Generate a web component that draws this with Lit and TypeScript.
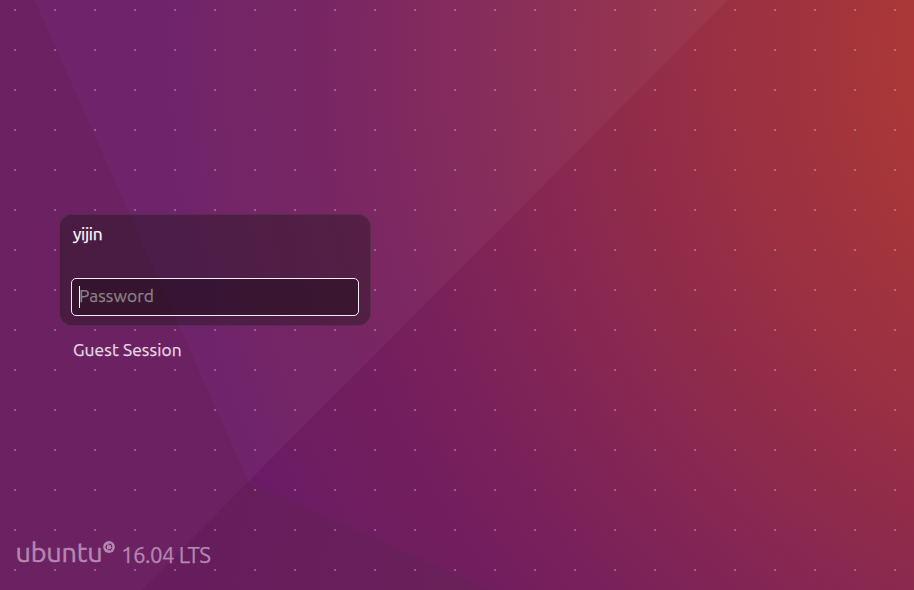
import { LitElement, html, css, svg } from "lit";
import { customElement, property } from "lit/decorators.js";

const PITCH = 40;
const PANEL = { left: 59, top: 213, right: 372, bottom: 326 };

function dotPath(width: number, height: number): string {
  let d = "";
  for (let y = 9; y < height; y += PITCH) {
    for (let x = 14; x < width; x += PITCH) {
      const covered = x > PANEL.left && x < PANEL.right && y > PANEL.top && y < PANEL.bottom;
      if (!covered) d += `M${x} ${y}h2v2h-2z`;
    }
  }
  return d;
}

@customElement("greeter-wallpaper")
export class GreeterWallpaper extends LitElement {
  static styles = css`
    :host { display: block; }
    svg { display: block; width: 914px; height: 590px; }
  `;
  render() {
    return html`<svg viewBox="0 0 914 590" aria-hidden="true">
      ${svg`
        <defs>
          <radialGradient id="warm" gradientUnits="userSpaceOnUse" cx="1160" cy="50" r="1000">
            <stop offset="0.245" stop-color="#ab3837"/>
            <stop offset="0.33" stop-color="#a3343c"/>
            <stop offset="0.43" stop-color="#9a3042"/>
            <stop offset="0.56" stop-color="#8e2a4b"/>
            <stop offset="0.66" stop-color="#842654"/>
            <stop offset="0.78" stop-color="#78205b"/>
            <stop offset="0.86" stop-color="#721e5e"/>
            <stop offset="0.94" stop-color="#6e1d61"/>
            <stop offset="1" stop-color="#6a1b65"/>
          </radialGradient>
          <linearGradient id="lower" gradientUnits="userSpaceOnUse" x1="200" y1="540" x2="480" y2="590">
            <stop offset="0" stop-color="#661d5d"/>
            <stop offset="1" stop-color="#6a2058"/>
          </linearGradient>
        </defs>
        <rect width="914" height="590" fill="url(#warm)"/>
        <path d="M34 0L248 482L728 0z" fill="#fff" fill-opacity=".04"/>
        <path d="M0 0H34L248 482L142 590H0z" fill="#6c2262"/>
        <path d="M248 482L142 590H490z" fill="url(#lower)"/>
        <path d=${dotPath(914, 590)} fill="#fff" fill-opacity=".27" shape-rendering="crispEdges"/>
      `}
    </svg>`;
  }
}

@customElement("login-box")
export class LoginBox extends LitElement {
  @property() user = "";
  static styles = css`
    :host {
      display: flex; flex-direction: column; justify-content: space-between;
      box-sizing: border-box; width: 312px; height: 112px; padding: 8px 11px 9px 11px;
      border: 1px solid rgba(120, 105, 115, .2); border-radius: 13px;
      background: rgba(16, 20, 14, .36);
    }
    .name { padding-left: 2px; color: #fff; font-size: 17.33px; line-height: 22px; letter-spacing: -.3px; -webkit-text-stroke: .25px currentColor; }
    .field {
      display: flex; align-items: center; box-sizing: border-box; height: 38px; padding-left: 7px;
      border: 1px solid #f3edf1; border-radius: 5px; background: rgba(0, 0, 0, .28);
      color: #898385; font-size: 17.33px;
    }
    .caret { width: 1px; height: 22px; margin-right: -1px; background: #fff; }
    .hint { line-height: 22px; margin-top: -2px; letter-spacing: .08px; -webkit-text-stroke: .25px currentColor; }
  `;
  render() {
    return html`<div class="name">${this.user}</div>
      <div class="field"><span class="caret"></span><span class="hint">Password</span></div>`;
  }
}

@customElement("release-mark")
export class ReleaseMark extends LitElement {
  static styles = css`
    :host { display: flex; align-items: flex-start; color: #b587b0; height: 32px; }
    .word { font-size: 27px; line-height: 32px; margin-top: -1px; letter-spacing: -.2px; -webkit-text-stroke: .45px currentColor; }
    .logo { width: 12px; height: 12px; margin: 4px 0 0 1px; }
    .version { font-size: 22.3px; line-height: 32px; margin: 2px 0 0 5.5px; letter-spacing: -.5px; -webkit-text-stroke: .25px currentColor; }
  `;
  render() {
    return html`<span class="word">ubuntu</span>
      <svg class="logo" viewBox="0 0 12 12" aria-hidden="true">
        <circle cx="6" cy="6" r="5.9" fill="currentColor"/>
        <circle cx="6" cy="6" r="2.8" fill="none" stroke="#6c2362" stroke-width="1.1" stroke-dasharray="4.86 1" stroke-dashoffset="-.5"/>
        <g fill="#6c2362"><circle cx="2.7" cy="6" r=".6"/><circle cx="7.7" cy="3.1" r=".6"/><circle cx="7.7" cy="8.9" r=".6"/></g>
      </svg>
      <span class="version">16.04 LTS</span>`;
  }
}

@customElement("app-root")
export class AppRoot extends LitElement {
  static styles = css`
    :host {
      display: grid; width: 914px; height: 590px; overflow: hidden;
      font-family: Ubuntu, "Noto Sans", sans-serif;
    }
    greeter-wallpaper, .screen { grid-area: 1 / 1; }
    .screen {
      z-index: 1; display: flex; flex-direction: column; align-items: flex-start;
      box-sizing: border-box; height: 590px; padding: 214px 0 21px 59px;
    }
    .guest { margin: 13px 0 0 14px; color: #e6d9e4; font-size: 17.33px; line-height: 22px; letter-spacing: .12px; -webkit-text-stroke: .25px currentColor; }
    release-mark { margin: auto 0 0 -43.5px; }
  `;
  render() {
    return html`<greeter-wallpaper></greeter-wallpaper>
      <div class="screen">
        <login-box user="yijin"></login-box>
        <div class="guest">Guest Session</div>
        <release-mark></release-mark>
      </div>`;
  }
}
